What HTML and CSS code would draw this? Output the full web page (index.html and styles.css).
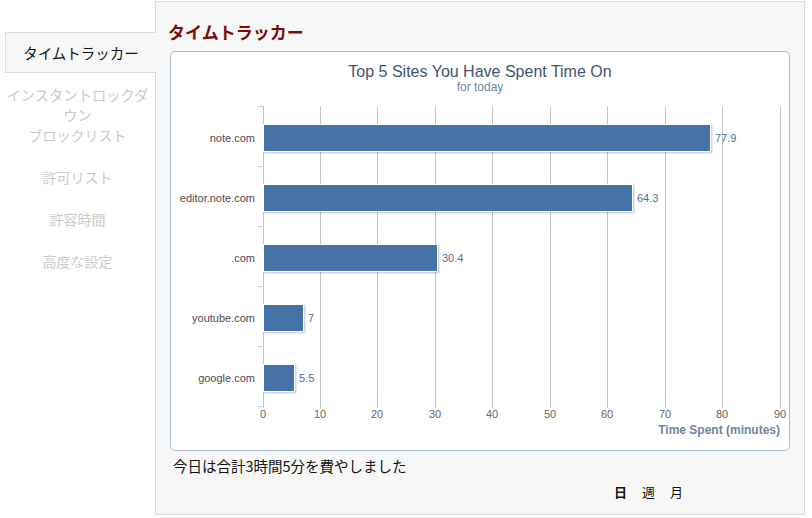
FILE: index.html
```html
<!DOCTYPE html>
<html lang="ja">
<head>
<meta charset="utf-8">
<title>タイムトラッカー</title>
<link rel="stylesheet" href="styles.css">
</head>
<body>
<div class="app">
  <nav class="sidebar">
    <div class="tab active">タイムトラッカー</div>
    <div class="tab item first">インスタントロックダウン</div>
    <div class="tab item second">ブロックリスト</div>
    <div class="tab item">許可リスト</div>
    <div class="tab item">許容時間</div>
    <div class="tab item">高度な設定</div>
  </nav>
  <main class="panel">
    <h1 class="title">タイムトラッカー</h1>
    <div class="chart-box">
      <svg class="chart" width="618" height="398" viewBox="171 51 618 398" xmlns="http://www.w3.org/2000/svg">
        <defs>
          <filter id="sh" x="-5%" y="-20%" width="110%" height="150%">
            <feDropShadow dx="1" dy="1" stdDeviation="0.8" flood-color="#000" flood-opacity="0.25"/>
          </filter>
        </defs>
        <text class="c-title" x="480" y="76" text-anchor="middle">Top 5 Sites You Have Spent Time On</text>
        <text class="c-sub" x="480" y="90" text-anchor="middle">for today</text>
        <g class="grid">
          <line x1="263.5" y1="105" x2="263.5" y2="407"/>
          <line x1="320.5" y1="105" x2="320.5" y2="407"/>
          <line x1="377.5" y1="105" x2="377.5" y2="407"/>
          <line x1="435.5" y1="105" x2="435.5" y2="407"/>
          <line x1="492.5" y1="105" x2="492.5" y2="407"/>
          <line x1="550.5" y1="105" x2="550.5" y2="407"/>
          <line x1="607.5" y1="105" x2="607.5" y2="407"/>
          <line x1="665.5" y1="105" x2="665.5" y2="407"/>
          <line x1="722.5" y1="105" x2="722.5" y2="407"/>
          <line x1="780.5" y1="105" x2="780.5" y2="407"/>
        </g>
        <g class="ticks">
          <line x1="258" y1="105.5" x2="263" y2="105.5"/>
          <line x1="258" y1="165.5" x2="263" y2="165.5"/>
          <line x1="258" y1="225.5" x2="263" y2="225.5"/>
          <line x1="258" y1="285.5" x2="263" y2="285.5"/>
          <line x1="258" y1="345.5" x2="263" y2="345.5"/>
          <line x1="258" y1="405.5" x2="263" y2="405.5"/>
        </g>
        <g class="xlabels" text-anchor="middle">
          <text x="263" y="417">0</text>
          <text x="320" y="417">10</text>
          <text x="377" y="417">20</text>
          <text x="435" y="417">30</text>
          <text x="492" y="417">40</text>
          <text x="550" y="417">50</text>
          <text x="607" y="417">60</text>
          <text x="665" y="417">70</text>
          <text x="722" y="417">80</text>
          <text x="780" y="417">90</text>
        </g>
        <text class="axis-title" x="780" y="433" text-anchor="end">Time Spent (minutes)</text>
        <g class="ylabels" text-anchor="end">
          <text x="255" y="141">note.com</text>
          <text x="255" y="201">editor.note.com</text>
          <text x="255" y="261">.com</text>
          <text x="255" y="321">youtube.com</text>
          <text x="255" y="381">google.com</text>
        </g>
        <g class="bars" filter="url(#sh)">
          <rect x="263.5" y="123.5" width="447" height="27"/>
          <rect x="263.5" y="183.5" width="369" height="27"/>
          <rect x="263.5" y="243.5" width="174" height="27"/>
          <rect x="263.5" y="303.5" width="40" height="27"/>
          <rect x="263.5" y="363.5" width="31" height="27"/>
        </g>
        <g class="dlabels">
          <text x="715" y="141">77.9</text>
          <text x="637" y="201">64.3</text>
          <text x="442" y="261">30.4</text>
          <text x="308" y="321">7</text>
          <text x="299" y="381">5.5</text>
        </g>
      </svg>
    </div>
    <p class="summary">今日は合計3時間5分を費やしました</p>
    <div class="periods">
      <span class="period selected">日</span>
      <span class="period">週</span>
      <span class="period">月</span>
    </div>
  </main>
</div>
</body>
</html>
```

FILE: styles.css
```css
html, body {
  margin: 0;
  padding: 0;
  background: #ffffff;
}

body {
  font-family: "Noto Sans CJK JP", "Liberation Sans", sans-serif;
  width: 812px;
  height: 518px;
  overflow: hidden;
}

.app {
  display: flex;
  align-items: flex-start;
  padding-top: 1px;
}

.sidebar {
  width: 155px;
  flex: none;
  padding-top: 31px;
  position: relative;
  z-index: 2;
}

.tab {
  text-align: center;
  font-size: 14px;
  line-height: 20px;
  color: #cbcbcb;
}

.tab.active {
  margin-left: 5px;
  margin-right: -1px;
  height: 39px;
  line-height: 39px;
  font-size: 14.5px;
  color: #111;
  background: #f7f7f7;
  border: 1px solid #dcdcdc;
  border-right: none;
}

.tab.item {
  padding: 11px 0;
}

.tab.item.first {
  padding: 12px 1px 0;
  font-size: 14.3px;
}

.tab.item.second {
  padding-top: 0;
}

.panel {
  width: 648px;
  height: 512px;
  flex: none;
  background: #f7f7f7;
  border: 1px solid #dcdcdc;
  position: relative;
  z-index: 1;
}

.title {
  margin: 0;
  padding: 18px 0 0 12px;
  height: 31px;
  font-size: 17px;
  line-height: 24px;
  font-weight: bold;
  color: #7f0a0a;
}

.chart-box {
  margin-left: 14px;
  width: 618px;
  height: 398px;
  background: #ffffff;
  border: 1px solid #a9bbd0;
  border-radius: 5px;
  overflow: hidden;
}

.chart {
  display: block;
  font-family: "Liberation Sans", Arial, sans-serif;
}

.c-title {
  font-size: 16px;
  fill: #3e576f;
}

.c-sub {
  font-size: 12px;
  fill: #6d869f;
}

.grid line {
  stroke: #c4c4c4;
  stroke-width: 1;
}

.ticks line {
  stroke: #c0d0e0;
  stroke-width: 1;
}

.xlabels text {
  font-size: 11px;
  fill: #666666;
}

.ylabels text {
  font-size: 11px;
  fill: #4d4d4d;
}

.axis-title {
  font-size: 12px;
  font-weight: bold;
  fill: #6d869f;
}

.bars rect {
  fill: #4572a7;
  stroke: #ffffff;
  stroke-width: 1;
}

.dlabels text {
  font-size: 11px;
  fill: #4572a7;
}

.summary {
  margin: 5px 0 0 17px;
  font-size: 14.5px;
  line-height: 20px;
  color: #111;
}

.periods {
  display: flex;
  gap: 15px;
  margin: 7px 0 0 458px;
  font-size: 13px;
  line-height: 18px;
  color: #111;
}

.period.selected {
  font-weight: bold;
}
```
